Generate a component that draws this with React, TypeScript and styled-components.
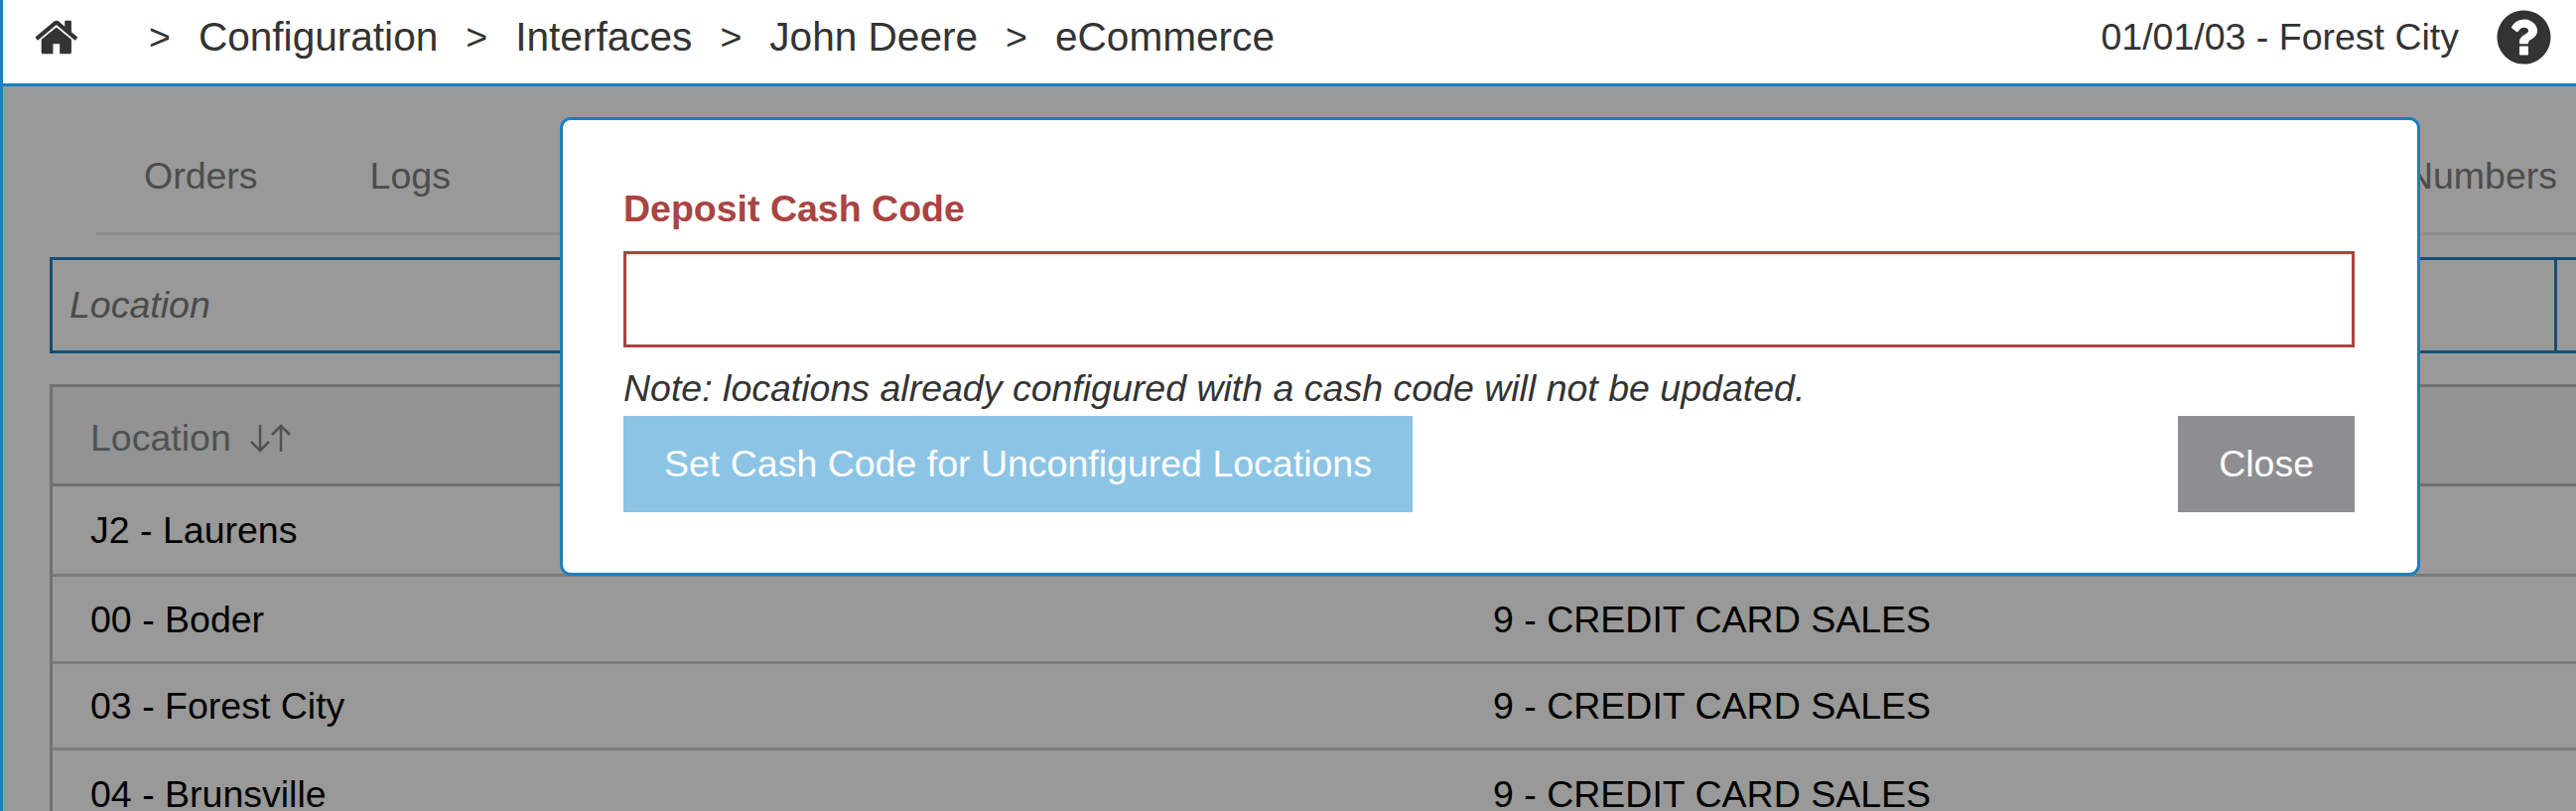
import React from 'react'
import styled, { createGlobalStyle } from 'styled-components'

const GlobalStyle = createGlobalStyle`
  html, body {
    margin: 0;
    padding: 0;
    height: 817px;
    overflow: hidden;
    background: #fff;
  }
  * {
    box-sizing: border-box;
  }
`

const Page = styled.div`
  position: relative;
  width: 2595px;
  height: 817px;
  overflow: hidden;
  border-left: 3px solid #1a80bf;
  font-family: 'Liberation Sans', Arial, sans-serif;
  font-size: 37.5px;
  color: #333;
  background: #fff;
`

const TopBar = styled.header`
  display: flex;
  align-items: center;
  height: 87px;
  padding: 0 21px 9px 31px;
  border-bottom: 3px solid #1a80bf;
  background: #fff;
`

const HomeIcon = styled.svg`
  width: 47px;
  height: 47px;
  fill: #333;
  margin: 0 68px 0 1px;
`

const Crumbs = styled.nav`
  display: flex;
  align-items: center;
  gap: 28px;
  font-size: 40.6px;
  flex: 1;
`

const Separator = styled.span`
  font-size: 37.5px;
`

const Branch = styled.span`
  margin-right: 34px;
`

const HelpIcon = styled.svg`
  width: 63px;
  height: 63px;
  fill: #333;
`

const Content = styled.main`
  padding: 0 0 0 47px;
`

const Tabs = styled.ul`
  display: flex;
  align-items: center;
  height: 150px;
  margin: 0 0 22px 47px;
  padding: 34px 19px 0 48px;
  list-style: none;
  border-bottom: 3px solid #ededed;
  color: #808080;
`

const Tab = styled.li<{ $end?: boolean }>`
  margin-right: ${(p) => (p.$end ? 0 : 113)}px;
  margin-left: ${(p) => (p.$end ? 'auto' : 0)};
`

const Filters = styled.div`
  display: flex;
  height: 97px;
  border: 3px solid #1f84c1;
  border-right: 0;
`

const FilterCell = styled.div<{ $grow?: boolean }>`
  display: flex;
  align-items: center;
  flex: ${(p) => (p.$grow ? 1 : '0 0 19px')};
  padding-left: 17px;
  font-style: italic;
  color: #7c7c7c;
  border-right: ${(p) => (p.$grow ? '3px solid #1f84c1' : 0)};
`

const Table = styled.div`
  margin-top: 31px;
  border: 3px solid #bebebe;
  border-right: 0;
  color: #000;
`

const Row = styled.div<{ $head?: boolean; $height: number }>`
  display: grid;
  grid-template-columns: 1413px 1fr;
  align-items: center;
  height: ${(p) => p.$height}px;
  padding: ${(p) => (p.$head ? 5 : 0)}px 0 0 38px;
  line-height: 36px;
  border-bottom: 3px solid;
  background: ${(p) => (p.$head ? '#f3f5f4' : '#fdfffd')};
  border-color: ${(p) => (p.$head ? '#bebebe' : '#cfcfcf')};
  color: ${(p) => (p.$head ? '#84878a' : '#000')};
`

const HeadLabel = styled.span`
  display: flex;
  align-items: center;
  gap: 18px;
`

const SortIcon = styled.svg`
  width: 43px;
  height: 29px;
  fill: none;
  stroke: currentColor;
  stroke-width: 2.5;
`

const Backdrop = styled.div`
  position: absolute;
  top: 87px;
  left: 0;
  right: 0;
  bottom: 0;
  background: rgba(0, 0, 0, 0.4);
`

const Modal = styled.section`
  position: absolute;
  top: 118px;
  left: 561px;
  width: 1874px;
  height: 462px;
  padding: 66px 63px 0 61px;
  background: #fff;
  border: 3px solid #1a80bf;
  border-radius: 11px;
`

const FieldLabel = styled.label`
  display: block;
  height: 66px;
  line-height: 46px;
  font-weight: 700;
  color: #a94442;
`

const FieldInput = styled.input`
  display: block;
  width: 100%;
  height: 97px;
  border: 3px solid #a94442;
  border-radius: 0;
  outline: 0;
  background: #fff;
  box-shadow: inset 0 2px 2px rgba(0, 0, 0, 0.075);
`

const Note = styled.p`
  margin: 0;
  height: 69px;
  padding-top: 20px;
  line-height: 43px;
  font-style: italic;
`

const Actions = styled.div`
  display: flex;
  justify-content: space-between;
`

const ActionButton = styled.button<{ $muted?: boolean }>`
  height: 97px;
  padding: 0 41px;
  border: 0;
  border-radius: 0;
  font-family: inherit;
  font-size: 37.5px;
  color: #fff;
  background: ${(p) => (p.$muted ? '#8e8e92' : '#8cc4e6')};
`

const rows = [
  { location: 'J2 - Laurens', code: '', height: 91 },
  { location: '00 - Boder', code: '9 - CREDIT CARD SALES', height: 88 },
  { location: '03 - Forest City', code: '9 - CREDIT CARD SALES', height: 87 },
  { location: '04 - Brunsville', code: '9 - CREDIT CARD SALES', height: 90 },
]

const App: React.FC = () => {
  return (
    <>
      <GlobalStyle />
      <Page>
        <TopBar>
          <HomeIcon viewBox="0 0 1792 1792">
            <path d="M1408 992v480q0 26-19 45t-45 19h-384v-384h-256v384h-384q-26 0-45-19t-19-45v-480q0-1 .5-3t.5-3l575-474 575 474q1 2 1 6zm223-69l-62 74q-8 9-21 11h-3q-13 0-21-7l-692-577-692 577q-12 8-24 7-13-2-21-11l-62-74q-8-10-7-23.500t11-21.500l719-599q32-26 76-26t76 26l244 204v-195q0-14 9-23t23-9h192q14 0 23 9t9 23v408l219 182q10 8 11 21.500t-7 23.500z" />
          </HomeIcon>
          <Crumbs>
            <Separator>&gt;</Separator>
            <span>Configuration</span>
            <Separator>&gt;</Separator>
            <span>Interfaces</span>
            <Separator>&gt;</Separator>
            <span>John Deere</span>
            <Separator>&gt;</Separator>
            <span>eCommerce</span>
          </Crumbs>
          <Branch>01/01/03 - Forest City</Branch>
          <HelpIcon viewBox="0 0 1792 1792">
            <path d="M1024 1376v-192q0-14-9-23t-23-9h-192q-14 0-23 9t-9 23v192q0 14 9 23t23 9h192q14 0 23-9t9-23zm256-672q0-88-55.500-163t-138.500-116-170-41q-243 0-371 213-15 24 8 42l132 100q7 6 19 6 16 0 25-12 53-68 86-92 34-24 86-24 48 0 85.500 26t37.500 59q0 38-20 61t-68 45q-63 28-115.500 86.500t-52.500 125.500v36q0 14 9 23t23 9h192q14 0 23-9t9-23q0-19 21.500-49.500t54.500-49.500q32-18 49-28.500t46-35 44.500-48 28-60.500 12.500-81zm384 192q0 209-103 385.500t-279.500 279.500-385.500 103-385.500-103-279.500-279.500-103-385.500 103-385.500 279.500-279.500 385.500-103 385.500 103 279.500 279.500 103 385.500z" />
          </HelpIcon>
        </TopBar>
        <Content>
          <Tabs>
            <Tab>Orders</Tab>
            <Tab>Logs</Tab>
            <Tab $end>Numbers</Tab>
          </Tabs>
          <Filters>
            <FilterCell $grow>Location</FilterCell>
            <FilterCell />
          </Filters>
          <Table>
            <Row $head $height={100}>
              <HeadLabel>
                Location
                <SortIcon viewBox="0 0 43 29">
                  <path d="M11 1v26M2 18l9 9 9-9M32 28V2M23 11l9-9 9 9" />
                </SortIcon>
              </HeadLabel>
              <span />
            </Row>
            {rows.map((row) => (
              <Row key={row.location} $height={row.height}>
                <span>{row.location}</span>
                <span>{row.code}</span>
              </Row>
            ))}
          </Table>
        </Content>
        <Backdrop />
        <Modal>
          <FieldLabel>Deposit Cash Code</FieldLabel>
          <FieldInput type="text" />
          <Note>Note: locations already configured with a cash code will not be updated.</Note>
          <Actions>
            <ActionButton>Set Cash Code for Unconfigured Locations</ActionButton>
            <ActionButton $muted>Close</ActionButton>
          </Actions>
        </Modal>
      </Page>
    </>
  )
}

export default App
